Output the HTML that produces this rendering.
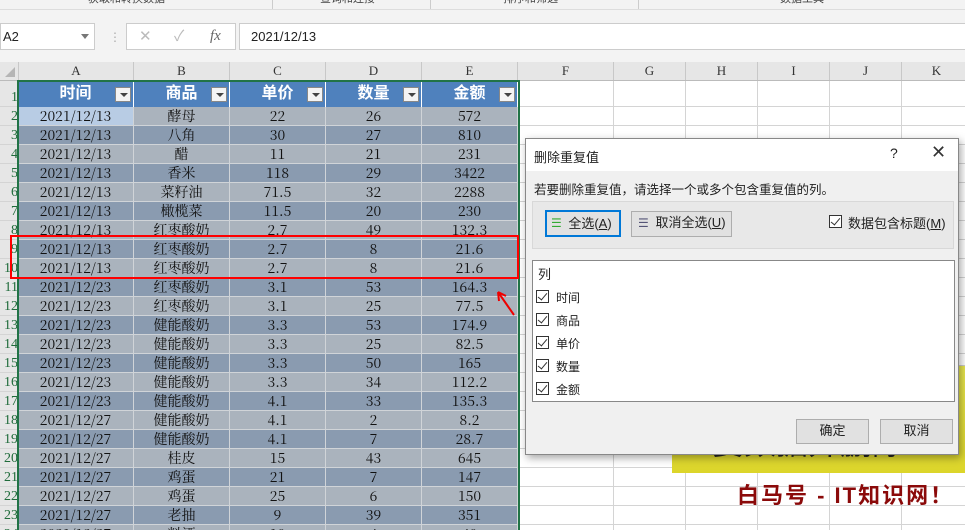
<!DOCTYPE html><html><head><meta charset="utf-8"><style>
*{margin:0;padding:0;box-sizing:border-box}
html,body{width:965px;height:530px;overflow:hidden}
body{background:#fff;position:relative;font-family:"Liberation Sans","Noto Sans CJK SC",sans-serif;font-size:12px;color:#222}
.a{position:absolute}
.cell{position:absolute;text-align:center;line-height:19px;font-family:"Noto Serif CJK SC","Liberation Serif",serif;font-size:14px;color:#111;border-right:1px solid #d0d4d8;border-bottom:1px solid #d0d4d8}
.rh{position:absolute;left:0;width:18px;text-align:right;color:#1f6b3a;font-family:"Liberation Serif",serif;font-size:14px;line-height:19px;border-bottom:1px solid #d4d4d4;background:#e6e6e6}
.ch{position:absolute;top:62px;height:18px;text-align:center;line-height:18px;font-family:"Liberation Serif",serif;font-size:13px;color:#333;border-right:1px solid #c8c8c8;background:#e6e6e6}
.hd{position:absolute;top:81px;height:26px;background:#4f81bd;color:#fff;font-weight:bold;font-size:16px;line-height:26px;text-align:center;border-right:1px solid #fff}
.dd{position:absolute;top:6px;width:16px;height:15px;background:#f4f4f4;border:1px solid #888}
.dd:after{content:"";position:absolute;left:4px;top:5px;border:4px solid transparent;border-top:4px solid #444}
.btn{position:absolute;background:#e1e1e1;border:1px solid #adadad;text-align:center;font-size:13px;line-height:22px}
.cb{position:absolute;width:13px;height:13px;border:1px solid #333;background:#fff}
.cb:after{content:"";position:absolute;left:3px;top:0px;width:4px;height:8px;border-right:1.5px solid #333;border-bottom:1.5px solid #333;transform:rotate(40deg)}
.gl{position:absolute;background:#d4d4d4}
</style></head><body>
<div class="a" style="left:0;top:0;width:965px;height:10px;background:#f3f3f3;border-bottom:1px solid #ddd;font-size:11px;color:#444;line-height:4px;overflow:hidden">
<span class="a" style="left:88px;top:-3px">获取和转换数据</span><span class="a" style="left:320px;top:-3px">查询和连接</span><span class="a" style="left:503px;top:-3px">排序和筛选</span><span class="a" style="left:780px;top:-3px">数据工具</span>
<div class="a" style="left:272px;top:0;width:1px;height:10px;background:#ccc"></div><div class="a" style="left:430px;top:0;width:1px;height:10px;background:#ccc"></div><div class="a" style="left:638px;top:0;width:1px;height:10px;background:#ccc"></div></div>
<div class="a" style="left:0;top:10px;width:965px;height:52px;background:#f3f3f3"></div>
<div class="a" style="left:0;top:23px;width:95px;height:27px;background:#fff;border:1px solid #ccc;font-size:13px;line-height:25px;padding-left:2px">A2<span class="a" style="left:80px;top:10px;border:4px solid transparent;border-top:5px solid #777"></span></div>
<div class="a" style="left:109px;top:30px;color:#aaa;font-size:12px">⋮</div>
<div class="a" style="left:126px;top:23px;width:110px;height:27px;background:#fff;border:1px solid #ccc;color:#bbb;font-size:15px;line-height:25px"><span class="a" style="left:12px">✕</span><span class="a" style="left:47px">✓</span><span class="a" style="left:83px;color:#666;font-style:italic;font-family:'Liberation Serif',serif">fx</span></div>
<div class="a" style="left:239px;top:23px;width:730px;height:27px;background:#fff;border:1px solid #ccc;font-size:13px;line-height:25px;padding-left:11px">2021/12/13</div>
<div class="a" style="left:0;top:62px;width:18px;height:18px;background:#e6e6e6"><div class="a" style="left:5px;top:5px;border-left:10px solid transparent;border-bottom:10px solid #b5b5b5"></div></div>
<div class="ch" style="left:18px;width:116px;border-left:1px solid #c8c8c8">A</div><div class="ch" style="left:134px;width:96px">B</div><div class="ch" style="left:230px;width:96px">C</div><div class="ch" style="left:326px;width:96px">D</div><div class="ch" style="left:422px;width:96px">E</div>
<div class="ch" style="left:518px;width:96px">F</div><div class="ch" style="left:614px;width:72px">G</div><div class="ch" style="left:686px;width:72px">H</div><div class="ch" style="left:758px;width:72px">I</div><div class="ch" style="left:830px;width:72px">J</div><div class="ch" style="left:902px;width:70px">K</div>
<div class="gl" style="left:0;top:80px;width:965px;height:1px;background:#bbb"></div>
<div class="rh" style="top:81px;height:26px;line-height:34px">1</div>
<div class="hd" style="left:18px;width:116px">时间<div class="dd" style="left:97px"></div></div>
<div class="hd" style="left:134px;width:96px">商品<div class="dd" style="left:77px"></div></div>
<div class="hd" style="left:230px;width:96px">单价<div class="dd" style="left:77px"></div></div>
<div class="hd" style="left:326px;width:96px">数量<div class="dd" style="left:77px"></div></div>
<div class="hd" style="left:422px;width:96px">金额<div class="dd" style="left:77px"></div></div>
<div id="t"></div>
<div class="a" style="left:17px;top:80px;width:503px;height:452px;border:2px solid #217346"></div>
<div class="a" style="left:10px;top:235px;width:509px;height:44px;border:2px solid #f00"></div>
<svg class="a" style="left:0;top:0" width="965" height="530"><g stroke="#e00" stroke-width="2" fill="none"><path d="M514 315 L498 292 M498 292 L499 301 M498 292 L506 296"/><path d="M642 285 L617 252 M617 252 L619 262 M617 252 L626 256"/></g></svg>
<div class="a" style="left:672px;top:365px;width:293px;height:108px;background:linear-gradient(#e8e650,#dcd52a);border-top:1px solid #ccc"></div>
<div class="a" style="left:712px;top:418px;font-size:32px;color:#222;white-space:nowrap">要数据并删除!</div>
<div class="a" style="left:737px;top:478px;font-size:22px;font-weight:bold;color:#8b0a0a;white-space:nowrap;letter-spacing:2px">白马号 - IT知识网！</div>
<div class="a" style="left:525px;top:138px;width:434px;height:317px;background:#f0f0f0;border:1px solid #888;box-shadow:2px 3px 8px rgba(0,0,0,.35)">
<div class="a" style="left:0;top:0;width:432px;height:32px;background:#fff"></div>
<div class="a" style="left:8px;top:8px;font-size:13px">删除重复值</div>
<div class="a" style="left:364px;top:6px;font-size:14px">?</div><div class="a" style="left:405px;top:3px;font-size:18px;color:#333">✕</div>
<div class="a" style="left:8px;top:40px;font-size:12.5px">若要删除重复值，请选择一个或多个包含重复值的列。</div>
<div class="a" style="left:6px;top:62px;width:422px;height:48px;background:#e8e8e8;border:1px solid #d8d8d8"></div>
<div class="btn" style="left:19px;top:71px;width:76px;height:27px;border:2px solid #0078d7;line-height:23px;padding-left:14px">全选(<u>A</u>)<span class="a" style="left:4px;top:0;color:#3a3;font-size:12px">☰</span></div>
<div class="btn" style="left:105px;top:72px;width:101px;height:26px;padding-left:18px">取消全选(<u>U</u>)<span class="a" style="left:6px;top:0;color:#557;font-size:12px">☰</span></div>
<div class="cb" style="left:303px;top:76px"></div><div class="a" style="left:322px;top:74px;font-size:13px">数据包含标题(<u>M</u>)</div>
<div class="a" style="left:6px;top:121px;width:423px;height:142px;background:#fff;border:1px solid #888"></div>
<div class="a" style="left:12px;top:125px;font-size:13px">列</div>
<div class="cb" style="left:10px;top:151px"></div><div class="a" style="left:30px;top:150px">时间</div>
<div class="cb" style="left:10px;top:174px"></div><div class="a" style="left:30px;top:173px">商品</div>
<div class="cb" style="left:10px;top:197px"></div><div class="a" style="left:30px;top:196px">单价</div>
<div class="cb" style="left:10px;top:220px"></div><div class="a" style="left:30px;top:219px">数量</div>
<div class="cb" style="left:10px;top:243px"></div><div class="a" style="left:30px;top:242px">金额</div>
<div class="btn" style="left:270px;top:280px;width:73px;height:25px">确定</div>
<div class="btn" style="left:354px;top:280px;width:73px;height:25px">取消</div>
</div>
<script>
var d=[["酵母",22,26,572],["八角",30,27,810],["醋",11,21,231],["香米",118,29,3422],["菜籽油",71.5,32,2288],["橄榄菜",11.5,20,230],["红枣酸奶",2.7,49,132.3],["红枣酸奶",2.7,8,21.6],["红枣酸奶",2.7,8,21.6],["红枣酸奶",3.1,53,164.3],["红枣酸奶",3.1,25,77.5],["健能酸奶",3.3,53,174.9],["健能酸奶",3.3,25,82.5],["健能酸奶",3.3,50,165],["健能酸奶",3.3,34,112.2],["健能酸奶",4.1,33,135.3],["健能酸奶",4.1,2,8.2],["健能酸奶",4.1,7,28.7],["桂皮",15,43,645],["鸡蛋",21,7,147],["鸡蛋",25,6,150],["老抽",9,39,351],["料酒",10,4,40]];
var dates=["2021/12/13","2021/12/13","2021/12/13","2021/12/13","2021/12/13","2021/12/13","2021/12/13","2021/12/13","2021/12/13","2021/12/23","2021/12/23","2021/12/23","2021/12/23","2021/12/23","2021/12/23","2021/12/23","2021/12/27","2021/12/27","2021/12/27","2021/12/27","2021/12/27","2021/12/27","2021/12/27"];
var h="",xs=[18,134,230,326,422,518],ws=[116,96,96,96,96];
for(var i=0;i<23;i++){var y=107+i*19;h+='<div class="rh" style="top:'+y+'px;height:19px">'+(i+2)+'</div>';
var bg=i%2?"#8a9bb0":"#aab3bd";var v=[dates[i],d[i][0],d[i][1],d[i][2],d[i][3]];
for(var c=0;c<5;c++){var b=(i==0&&c==0)?"#b8cce4":bg;h+='<div class="cell" style="left:'+xs[c]+'px;top:'+y+'px;width:'+ws[c]+'px;height:19px;background:'+b+'">'+v[c]+'</div>';}
h+='<div class="gl" style="left:518px;top:'+(y+18)+'px;width:447px;height:1px"></div>';}
var gx=[614,686,758,830,902];for(var k=0;k<5;k++)h+='<div class="gl" style="left:'+(gx[k]-1)+'px;top:81px;width:1px;height:449px"></div>';
h+='<div class="gl" style="left:518px;top:106px;width:447px;height:1px"></div>';
document.getElementById("t").innerHTML=h;
</script>
</body></html>
